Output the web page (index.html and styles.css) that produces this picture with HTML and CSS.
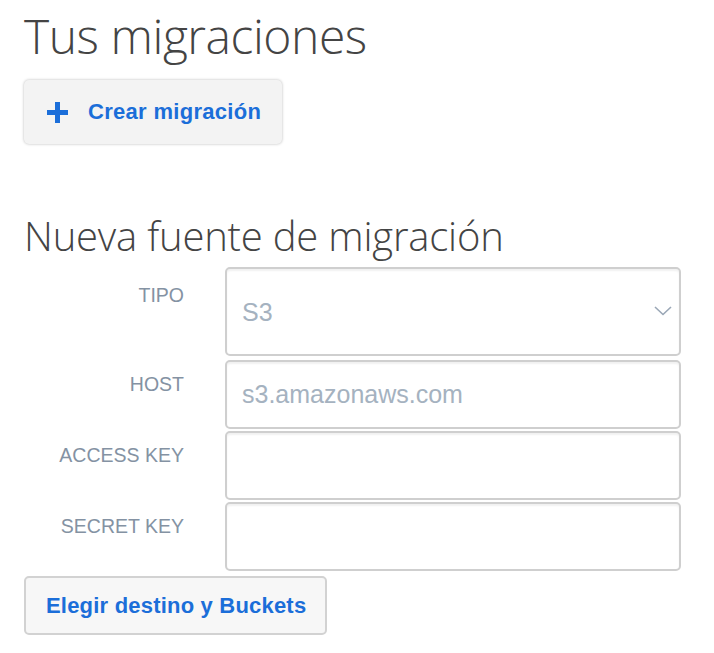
FILE: index.html
```html
<!DOCTYPE html>
<html lang="es">
<head>
  <meta charset="UTF-8" />
  <meta name="viewport" content="width=device-width, initial-scale=1.0"/>
  <title>Tus migraciones</title>
  <link rel="stylesheet" href="styles.css">
</head>
<body>
  <div class="page">
    <h1>Tus migraciones</h1>

    <button class="btn btn-create">
      <svg class="plus" width="21" height="21" viewBox="0 0 21 21">
        <rect x="8" y="0" width="5" height="21" fill="currentColor"/>
        <rect x="0" y="8" width="21" height="5" fill="currentColor"/>
      </svg>
      <span>Crear migración</span>
    </button>

    <h2>Nueva fuente de migración</h2>

    <form class="source-form">
      <label class="field-label label-tipo" for="tipo">TIPO</label>
      <div class="select-wrap">
        <select id="tipo" class="field field-select">
          <option>S3</option>
        </select>
        <svg class="chevron" width="18" height="10" viewBox="0 0 18 10">
          <polyline points="1,1 9,8.5 17,1" fill="none" stroke="currentColor" stroke-width="1.6"/>
        </svg>
      </div>

      <label class="field-label" for="host">HOST</label>
      <input id="host" class="field" type="text" placeholder="s3.amazonaws.com">

      <label class="field-label" for="access">ACCESS KEY</label>
      <input id="access" class="field" type="text">

      <label class="field-label" for="secret">SECRET KEY</label>
      <input id="secret" class="field" type="text">
    </form>

    <button class="btn btn-next">Elegir destino y Buckets</button>
  </div>
</body>
</html>
```

FILE: styles.css
```css
body {
  margin: 0;
  background: #fff;
  font-family: "Liberation Sans", Arial, sans-serif;
}
.page {
  padding: 0 24px;
}
h1, h2 {
  font-family: "Open Sans", sans-serif;
  font-weight: 300;
  color: #444;
  margin: 0;
}
h1 {
  font-size: 48px;
  line-height: 48px;
  letter-spacing: -0.45px;
  padding-top: 12px;
}
h2 {
  font-size: 40px;
  line-height: 40px;
  letter-spacing: -0.2px;
  margin-top: 72px;
}
.btn {
  display: flex;
  align-items: center;
  font-family: "Liberation Sans", Arial, sans-serif;
  font-weight: bold;
  font-size: 22px;
  letter-spacing: 0.3px;
  color: #1b6ed9;
  cursor: pointer;
  border-radius: 5px;
}
.btn-create {
  margin-top: 20px;
  width: 258px;
  height: 64px;
  padding: 0 0 0 23px;
  gap: 20px;
  background: #f3f3f3;
  border: none;
  box-shadow: 0 0 3px rgba(0, 0, 0, 0.28);
}
.plus {
  display: block;
  margin-top: 1px;
}
.btn-next {
  margin-top: 5px;
  width: 303px;
  height: 59px;
  padding: 0 0 0 20px;
  letter-spacing: 0.2px;
  background: #f7f7f7;
  border: 2px solid #d2d2d2;
}
.source-form {
  display: grid;
  grid-template-columns: 160px 456px;
  column-gap: 41px;
  row-gap: 2px;
  margin-top: 11px;
}
.field-label {
  text-align: right;
  font-size: 19.5px;
  line-height: 20px;
  color: #8492a3;
  padding-top: 14px;
}
.label-tipo {
  padding-top: 18px;
}
.field {
  box-sizing: border-box;
  width: 100%;
  height: 69px;
  margin: 0;
  padding: 0 15px;
  font-family: "Liberation Sans", Arial, sans-serif;
  font-size: 25px;
  color: #a5b2c0;
  background: #fff;
  border: 2px solid #cfcfcf;
  border-radius: 5px;
  box-shadow: inset 0 2px 2px rgba(0, 0, 0, 0.06);
  outline: none;
}
.field::placeholder {
  color: #a5b2c0;
}
.select-wrap {
  position: relative;
  margin-bottom: 2px;
}
.field-select {
  height: 89px;
  appearance: none;
  -webkit-appearance: none;
}
.chevron {
  position: absolute;
  right: 9px;
  top: 39px;
  color: #9aa7b6;
  pointer-events: none;
}
```
